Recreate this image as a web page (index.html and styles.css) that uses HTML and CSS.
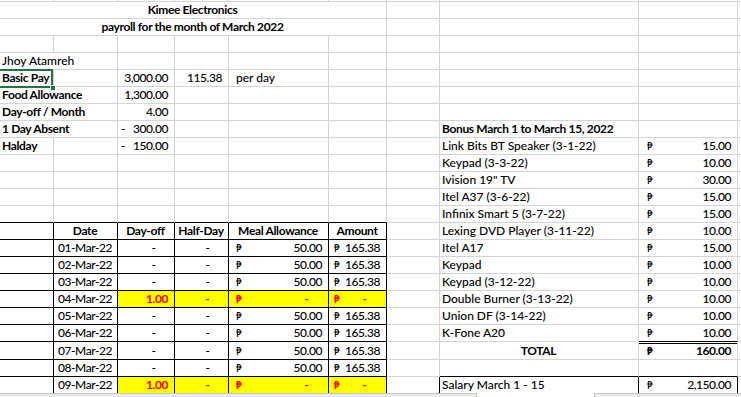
FILE: index.html
```html
<!DOCTYPE html>
<html lang="en">
<head>
<meta charset="utf-8">
<title>Kimee Electronics payroll</title>
<link rel="stylesheet" href="styles.css">
</head>
<body>
<div class="sheet">
  <div class="row r0">
    <div class="c"></div><div class="c"></div><div class="c"></div><div class="c"></div><div class="c"></div><div class="c"></div><div class="c"></div><div class="c"></div><div class="c"></div><div class="c"></div>
  </div>
  <div class="row">
    <div class="c s6 b ctr">Kimee Electronics</div><div class="c"></div><div class="c"></div><div class="c"></div><div class="c"></div>
  </div>
  <div class="row">
    <div class="c s6 b ctr">payroll for the month of March 2022</div><div class="c"></div><div class="c"></div><div class="c"></div><div class="c"></div>
  </div>
  <div class="row">
    <div class="c"></div><div class="c"></div><div class="c"></div><div class="c"></div><div class="c"></div><div class="c"></div><div class="c"></div><div class="c"></div><div class="c"></div><div class="c"></div>
  </div>
  <div class="row">
    <div class="c s2">Jhoy Atamreh</div><div class="c"></div><div class="c"></div><div class="c"></div><div class="c"></div><div class="c"></div><div class="c"></div><div class="c"></div><div class="c"></div>
  </div>
  <div class="row">
    <div class="c b">Basic Pay<span class="selbox"></span><span class="handle"></span></div>
    <div class="c"></div>
    <div class="c num">3,000.00</div>
    <div class="c num">115.38</div>
    <div class="c pd">per day</div>
    <div class="c"></div><div class="c"></div><div class="c"></div><div class="c"></div><div class="c"></div>
  </div>
  <div class="row">
    <div class="c s2 b">Food Allowance</div>
    <div class="c num">1,300.00</div>
    <div class="c"></div><div class="c"></div><div class="c"></div><div class="c"></div><div class="c"></div><div class="c"></div><div class="c"></div>
  </div>
  <div class="row">
    <div class="c s2 b">Day-off / Month</div>
    <div class="c num">4.00</div>
    <div class="c"></div><div class="c"></div><div class="c"></div><div class="c"></div><div class="c"></div><div class="c"></div><div class="c"></div>
  </div>
  <div class="row">
    <div class="c s2 b">1 Day Absent</div>
    <div class="c acc neg"><span>-</span><span class="n">300.00</span></div>
    <div class="c"></div><div class="c"></div><div class="c"></div><div class="c"></div>
    <div class="c b">Bonus March 1 to March 15, 2022</div>
    <div class="c"></div><div class="c"></div>
  </div>
  <div class="row">
    <div class="c b">Halday</div>
    <div class="c"></div>
    <div class="c acc neg"><span>-</span><span class="n">150.00</span></div>
    <div class="c"></div><div class="c"></div><div class="c"></div><div class="c"></div>
    <div class="c">Link Bits BT Speaker (3-1-22)</div>
    <div class="c acc pi"><span class="p">₱</span><span class="n">15.00</span></div>
    <div class="c"></div>
  </div>
  <div class="row">
    <div class="c"></div><div class="c"></div><div class="c"></div><div class="c"></div><div class="c"></div><div class="c"></div><div class="c"></div>
    <div class="c">Keypad (3-3-22)</div>
    <div class="c acc pi"><span class="p">₱</span><span class="n">10.00</span></div>
    <div class="c"></div>
  </div>
  <div class="row">
    <div class="c"></div><div class="c"></div><div class="c"></div><div class="c"></div><div class="c"></div><div class="c"></div><div class="c"></div>
    <div class="c">Ivision 19" TV</div>
    <div class="c acc pi"><span class="p">₱</span><span class="n">30.00</span></div>
    <div class="c"></div>
  </div>
  <div class="row">
    <div class="c"></div><div class="c"></div><div class="c"></div><div class="c"></div><div class="c"></div><div class="c"></div><div class="c"></div>
    <div class="c">Itel A37 (3-6-22)</div>
    <div class="c acc pi"><span class="p">₱</span><span class="n">15.00</span></div>
    <div class="c"></div>
  </div>
  <div class="row">
    <div class="c kb"></div><div class="c kb"></div><div class="c kb"></div><div class="c kb"></div><div class="c kb"></div><div class="c kb"></div><div class="c"></div>
    <div class="c">Infinix Smart 5 (3-7-22)</div>
    <div class="c acc pi"><span class="p">₱</span><span class="n">15.00</span></div>
    <div class="c"></div>
  </div>
  <div class="row">
    <div class="c kb kr"></div>
    <div class="c kb kr b ctr">Date</div>
    <div class="c kb kr b ctr">Day-off</div>
    <div class="c kb kr b ctr">Half-Day</div>
    <div class="c kb kr b ctr">Meal Allowance</div>
    <div class="c kb kr b ctr">Amount</div>
    <div class="c"></div>
    <div class="c">Lexing DVD Player (3-11-22)</div>
    <div class="c acc pi"><span class="p">₱</span><span class="n">10.00</span></div>
    <div class="c"></div>
  </div>
  <div class="row">
    <div class="c kb kr"></div>
    <div class="c kb kr dt">01-Mar-22</div>
    <div class="c kb kr z">-</div>
    <div class="c kb kr z">-</div>
    <div class="c kb kr acc me"><span class="p">₱</span><span class="n">50.00</span></div>
    <div class="c kb kr acc am"><span class="p">₱</span><span class="n">165.38</span></div>
    <div class="c"></div>
    <div class="c">Itel A17</div>
    <div class="c acc pi"><span class="p">₱</span><span class="n">15.00</span></div>
    <div class="c"></div>
  </div>
  <div class="row">
    <div class="c kb kr"></div>
    <div class="c kb kr dt">02-Mar-22</div>
    <div class="c kb kr z">-</div>
    <div class="c kb kr z">-</div>
    <div class="c kb kr acc me"><span class="p">₱</span><span class="n">50.00</span></div>
    <div class="c kb kr acc am"><span class="p">₱</span><span class="n">165.38</span></div>
    <div class="c"></div>
    <div class="c">Keypad</div>
    <div class="c acc pi"><span class="p">₱</span><span class="n">10.00</span></div>
    <div class="c"></div>
  </div>
  <div class="row">
    <div class="c kb kr"></div>
    <div class="c kb kr dt">03-Mar-22</div>
    <div class="c kb kr z">-</div>
    <div class="c kb kr z">-</div>
    <div class="c kb kr acc me"><span class="p">₱</span><span class="n">50.00</span></div>
    <div class="c kb kr acc am"><span class="p">₱</span><span class="n">165.38</span></div>
    <div class="c"></div>
    <div class="c">Keypad (3-12-22)</div>
    <div class="c acc pi"><span class="p">₱</span><span class="n">10.00</span></div>
    <div class="c"></div>
  </div>
  <div class="row">
    <div class="c kb kr"></div>
    <div class="c kb kr dt">04-Mar-22</div>
    <div class="c kb kr num hl">1.00</div>
    <div class="c kb kr z hl">-</div>
    <div class="c kb kr acc me hl"><span class="p">₱</span><span class="hz">-</span></div>
    <div class="c kb kr acc am hl"><span class="p">₱</span><span class="hz">-</span></div>
    <div class="c"></div>
    <div class="c">Double Burner (3-13-22)</div>
    <div class="c acc pi"><span class="p">₱</span><span class="n">10.00</span></div>
    <div class="c"></div>
  </div>
  <div class="row">
    <div class="c kb kr"></div>
    <div class="c kb kr dt">05-Mar-22</div>
    <div class="c kb kr z">-</div>
    <div class="c kb kr z">-</div>
    <div class="c kb kr acc me"><span class="p">₱</span><span class="n">50.00</span></div>
    <div class="c kb kr acc am"><span class="p">₱</span><span class="n">165.38</span></div>
    <div class="c"></div>
    <div class="c">Union DF (3-14-22)</div>
    <div class="c acc pi"><span class="p">₱</span><span class="n">10.00</span></div>
    <div class="c"></div>
  </div>
  <div class="row">
    <div class="c kb kr"></div>
    <div class="c kb kr dt">06-Mar-22</div>
    <div class="c kb kr z">-</div>
    <div class="c kb kr z">-</div>
    <div class="c kb kr acc me"><span class="p">₱</span><span class="n">50.00</span></div>
    <div class="c kb kr acc am"><span class="p">₱</span><span class="n">165.38</span></div>
    <div class="c"></div>
    <div class="c">K-Fone A20</div>
    <div class="c acc pi kb"><span class="p">₱</span><span class="n">10.00</span></div>
    <div class="c"></div>
  </div>
  <div class="row">
    <div class="c kb kr"></div>
    <div class="c kb kr dt">07-Mar-22</div>
    <div class="c kb kr z">-</div>
    <div class="c kb kr z">-</div>
    <div class="c kb kr acc me"><span class="p">₱</span><span class="n">50.00</span></div>
    <div class="c kb kr acc am"><span class="p">₱</span><span class="n">165.38</span></div>
    <div class="c"></div>
    <div class="c b ctr">TOTAL</div>
    <div class="c acc pi b dbl"><span class="p">₱</span><span class="n">160.00</span></div>
    <div class="c"></div>
  </div>
  <div class="row">
    <div class="c kb kr"></div>
    <div class="c kb kr dt">08-Mar-22</div>
    <div class="c kb kr z">-</div>
    <div class="c kb kr z">-</div>
    <div class="c kb kr acc me"><span class="p">₱</span><span class="n">50.00</span></div>
    <div class="c kb kr acc am"><span class="p">₱</span><span class="n">165.38</span></div>
    <div class="c"></div>
    <div class="c kb"></div>
    <div class="c kb"></div>
    <div class="c"></div>
  </div>
  <div class="row last">
    <div class="c kr"></div>
    <div class="c kr dt">09-Mar-22</div>
    <div class="c kr num hl">1.00</div>
    <div class="c kr z hl">-</div>
    <div class="c kr acc me hl"><span class="p">₱</span><span class="hz">-</span></div>
    <div class="c kr acc am hl"><span class="p">₱</span><span class="hz">-</span></div>
    <div class="c kr"></div>
    <div class="c kr">Salary March 1 - 15</div>
    <div class="c kr acc pi"><span class="p">₱</span><span class="n">2,150.00</span></div>
    <div class="c"></div>
  </div>
</div>
<div class="tabs">
  <div class="tab first"></div>
  <div class="gap"></div>
  <div class="tab second"></div>
</div>
</body>
</html>
```

FILE: styles.css
```css
html, body {
  margin: 0;
  padding: 0;
  background: #ffffff;
}

body {
  width: 741px;
  height: 397px;
  overflow: hidden;
  font-family: Lato, "Liberation Sans", sans-serif;
  font-size: 12px;
  font-weight: 500;
  color: #000000;
}

.sheet {
  display: grid;
  grid-template-columns: 54px 64px 57px 54px 100px 58px 53px 199px 99px 1fr;
  grid-template-rows: 2px repeat(20, 17px) 18px 17px 16px;
}

.row {
  display: contents;
}

.c {
  box-sizing: border-box;
  position: relative;
  display: flex;
  align-items: flex-end;
  min-width: 0;
  padding: 0 3px 0 2px;
  border-right: 1px solid #d4d4d4;
  border-bottom: 1px solid #d4d4d4;
  line-height: 16px;
  white-space: nowrap;
}

.last > .c {
  border-bottom: 0;
}

.s2 { grid-column: span 2; }
.s6 { grid-column: span 6; }

.b {
  font-weight: 700;
  letter-spacing: -0.35px;
}

.ctr { justify-content: center; }

.num {
  justify-content: flex-end;
  padding-right: 6px;
  letter-spacing: -0.45px;
}

.n { letter-spacing: -0.45px; }

.dt {
  justify-content: flex-end;
  padding-right: 5px;
  letter-spacing: -0.45px;
}

.pd { padding-left: 7px; }

.z {
  justify-content: flex-end;
  padding-right: 18px;
}

.acc { justify-content: space-between; }

.neg {
  padding-left: 3px;
  padding-right: 6px;
}

.me {
  padding-left: 7px;
  padding-right: 6px;
}

.am {
  padding-left: 5px;
  padding-right: 6px;
}

.pi {
  padding-left: 8px;
  padding-right: 6px;
}

.p {
  font-family: "Noto Sans", "DejaVu Sans", sans-serif;
  font-size: 10px;
  letter-spacing: 0;
}

.hz { padding-right: 13px; }

.kb { border-bottom-color: #000000; }
.kr { border-right-color: #000000; }

.hl {
  background: #ffff00;
  color: #ff0000;
  font-weight: 700;
}

.dbl {
  box-shadow: inset 0 1px 0 #ffffff, inset 0 2px 0 #000000;
}

.selbox {
  position: absolute;
  top: -1px;
  left: 0;
  right: 0;
  bottom: -2px;
  border: 2px solid #217346;
  border-left: 0;
  z-index: 2;
}

.handle {
  position: absolute;
  right: -3px;
  bottom: -5px;
  width: 4px;
  height: 4px;
  background: #217346;
  border: 1px solid #ffffff;
  z-index: 3;
}

.tabs {
  display: flex;
  height: 4px;
}

.tab {
  box-sizing: border-box;
  background: #ececec;
  border-top: 1px solid #c6c6c6;
}

.tab.first {
  width: 477px;
  border-right: 1px solid #c6c6c6;
}

.gap { width: 117px; }

.tab.second {
  flex: 1;
  border-left: 1px solid #c6c6c6;
}
```
